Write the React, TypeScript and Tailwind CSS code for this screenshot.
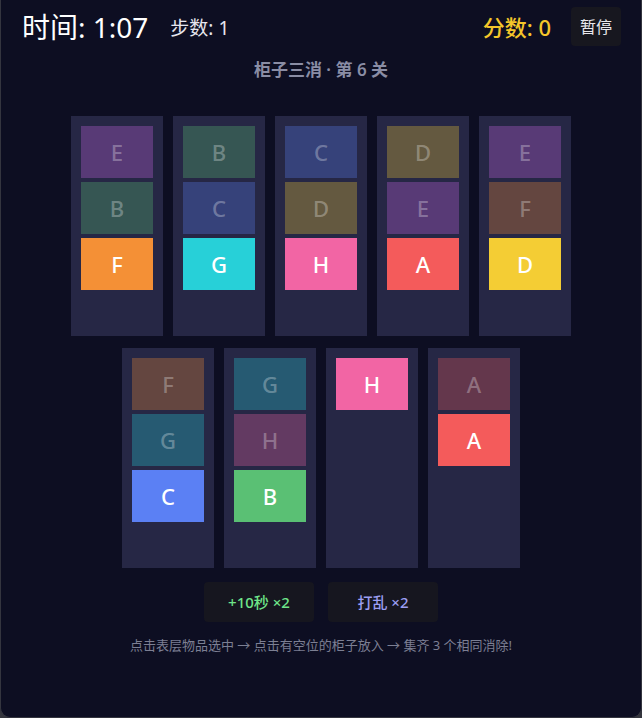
import React from "react";

type Item = { l: string; dim: boolean };

const bright: Record<string, string> = {
  A: "bg-[#f45b5b]",
  B: "bg-[#5ac074]",
  C: "bg-[#5b80f4]",
  D: "bg-[#f4cd34]",
  E: "bg-[#cc66e8]",
  F: "bg-[#f49036]",
  G: "bg-[#27d0d8]",
  H: "bg-[#f265a4]",
};

const dim: Record<string, string> = {
  A: "bg-[#64374c]",
  B: "bg-[#365653]",
  C: "bg-[#36427a]",
  D: "bg-[#645940]",
  E: "bg-[#583a76]",
  F: "bg-[#644640]",
  G: "bg-[#265a72]",
  H: "bg-[#633a62]",
};

const mk = (s: string): Item[] =>
  s.split("").map((c, i, arr) => ({ l: c, dim: i < arr.length - 1 }));

const row1 = [mk("EBF"), mk("BCG"), mk("CDH"), mk("DEA"), mk("EFD")];
const row2 = [mk("FGC"), mk("GHB"), mk("H"), mk("AA")];

function Cabinet({ items }: { items: Item[] }) {
  return (
    <div className="w-[92px] h-[220px] bg-[#262745] p-[10px] flex flex-col gap-[4px]">
      {items.map((it, i) => (
        <div
          key={i}
          className={`h-[52px] w-full flex items-center justify-center text-[22px] font-medium ${
            it.dim ? `${dim[it.l]} text-white/30` : `${bright[it.l]} text-white`
          }`}
        >
          {it.l}
        </div>
      ))}
    </div>
  );
}

export default function App() {
  return (
    <div className="w-[642px] h-[718px] bg-[#34353d]">
      <div
        className="w-full h-full bg-[#0d0e22] border-l border-r border-b border-[#34353f] rounded-b-[10px] flex flex-col"
        style={{ fontFamily: '"Noto Sans", "Noto Sans CJK SC", sans-serif' }}
      >
        <div className="flex items-center justify-between pl-[21px] pr-[20px] pt-[7px]">
          <div className="flex items-center gap-[22px]">
            <span className="text-[28px] text-white leading-none">时间: 1:07</span>
            <span className="text-[19px] text-[#e6e6ee] leading-none mt-[3px]">步数: 1</span>
          </div>
          <div className="flex items-center gap-[20px]">
            <span className="text-[22px] text-[#f5c62a] font-medium leading-none">分数: 0</span>
            <button className="w-[50px] h-[39px] bg-[#17171f] rounded-[4px] text-[16px] text-[#e8e8ee] flex items-center justify-center">
              暂停
            </button>
          </div>
        </div>

        <div className="mt-[12px] text-center text-[17px] leading-[24px] font-semibold text-[#8a8da5]">
          柜子三消 · 第 6 关
        </div>

        <div className="mt-[34px] flex flex-col items-center gap-[12px]">
          <div className="flex gap-[10px]">
            {row1.map((c, i) => (
              <Cabinet key={i} items={c} />
            ))}
          </div>
          <div className="flex gap-[10px]">
            {row2.map((c, i) => (
              <Cabinet key={i} items={c} />
            ))}
          </div>
        </div>

        <div className="mt-[14px] flex justify-center gap-[14px]">
          <button className="w-[110px] h-[40px] bg-[#16161f] rounded-[4px] text-[15px] font-medium text-[#6fe58a]">
            +10秒 ×2
          </button>
          <button className="w-[110px] h-[40px] bg-[#16161f] rounded-[4px] text-[15px] font-medium text-[#9c9ef2]">
            打乱 ×2
          </button>
        </div>

        <div className="mt-[14px] text-center text-[13px] leading-[18px] text-[#7c7f93]">
          点击表层物品选中 → 点击有空位的柜子放入 → 集齐 3 个相同消除!
        </div>
      </div>
    </div>
  );
}
